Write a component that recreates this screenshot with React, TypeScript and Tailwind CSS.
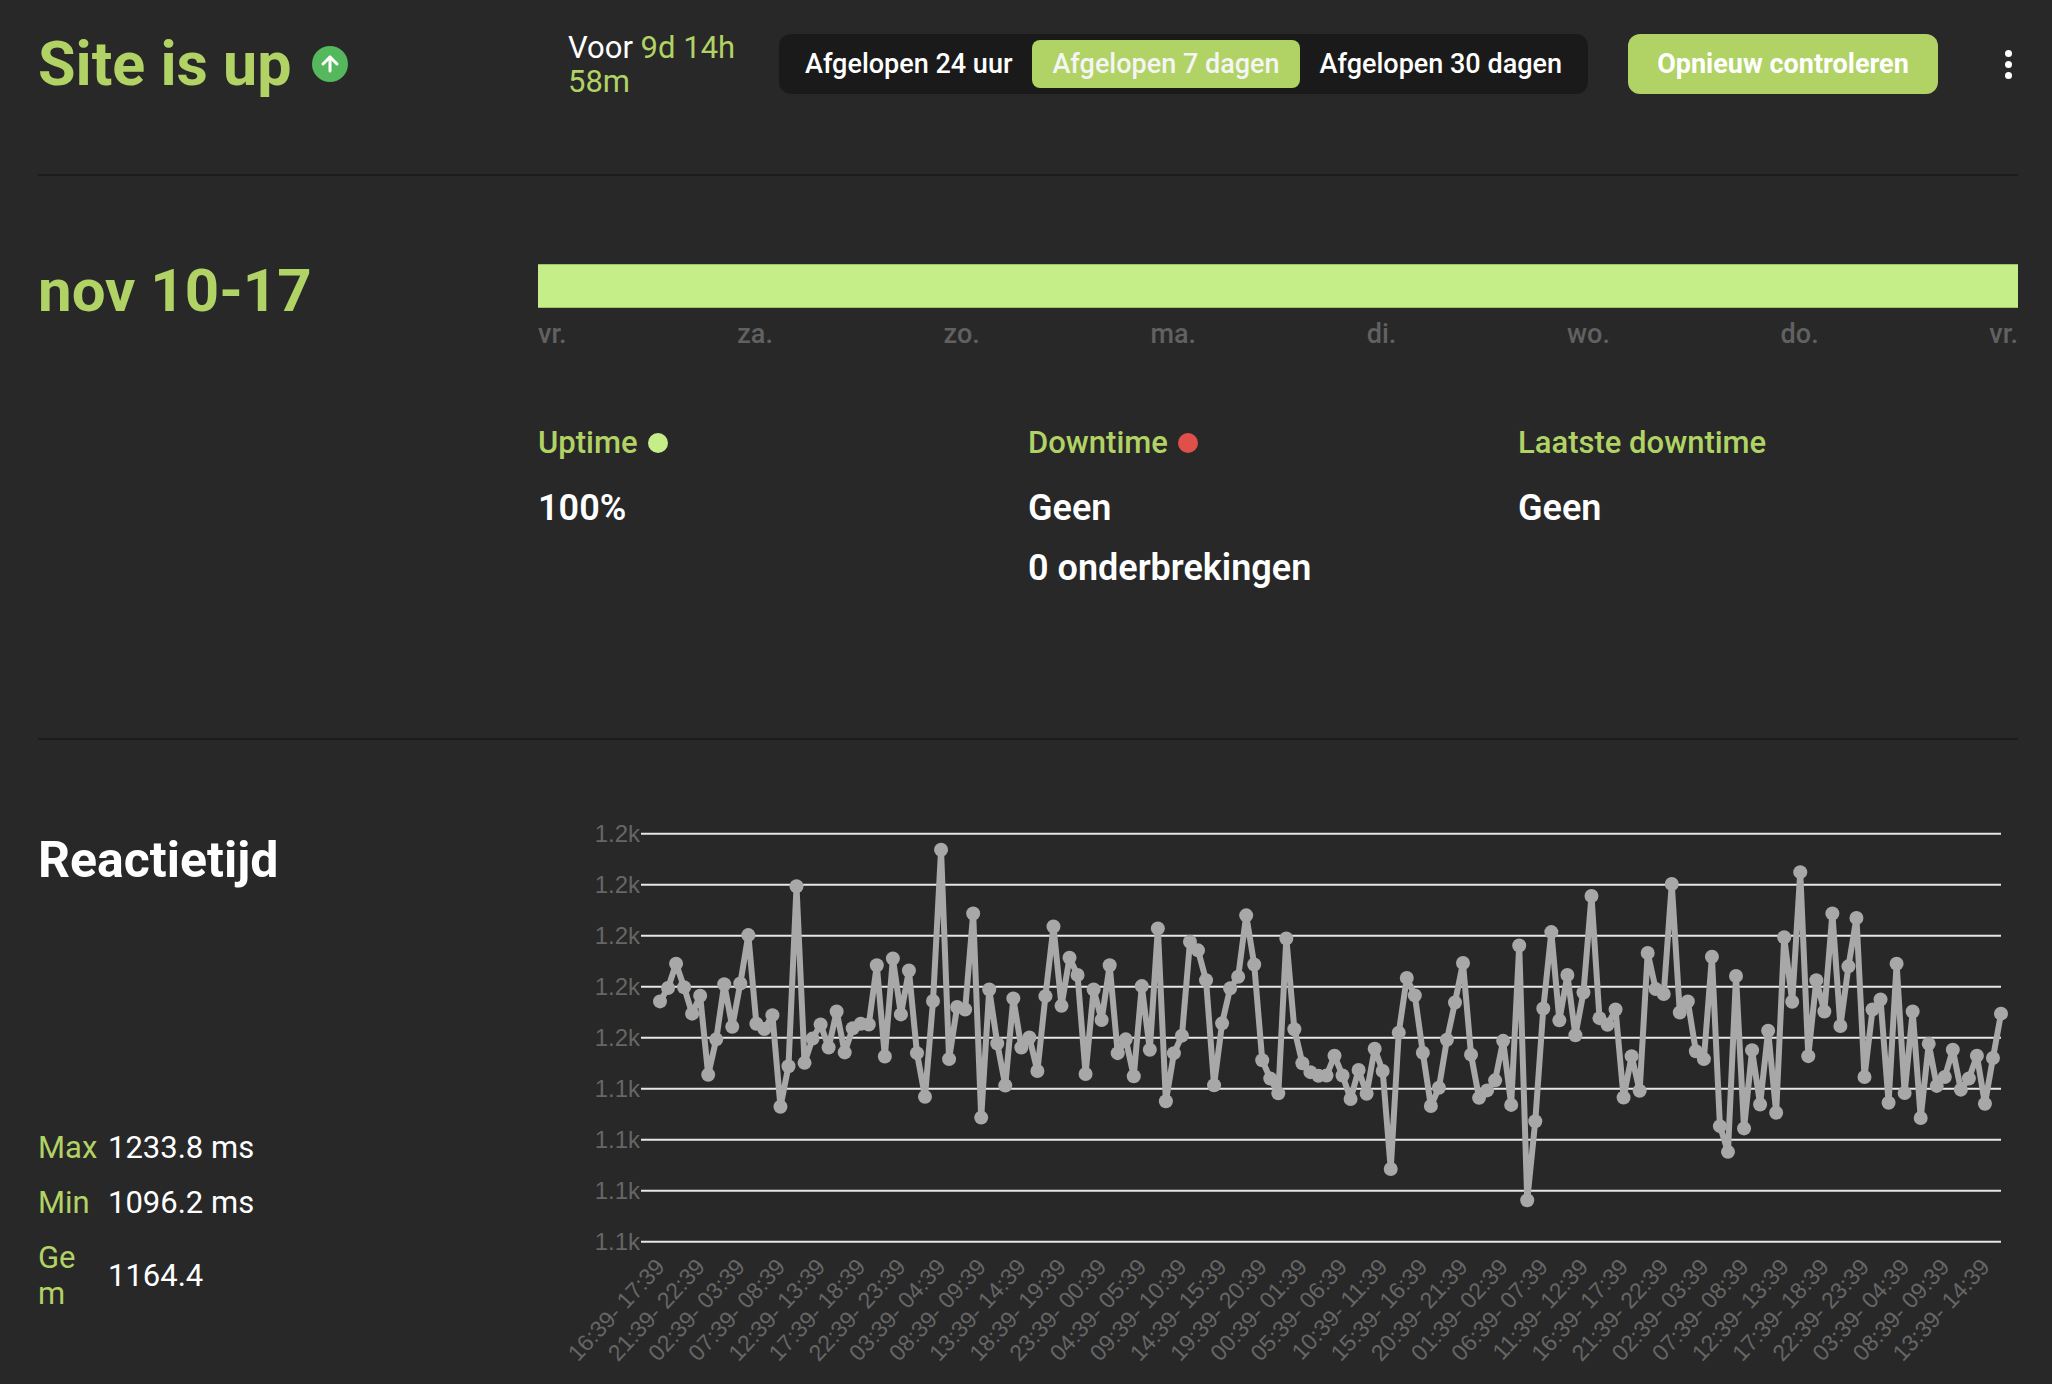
import React from 'react';
import { ArrowUp } from 'lucide-react';

const tabs = ['Afgelopen 24 uur', 'Afgelopen 7 dagen', 'Afgelopen 30 dagen'];
const days = ['vr.', 'za.', 'zo.', 'ma.', 'di.', 'wo.', 'do.', 'vr.'];

// y positions of the response time samples, traced from the crops
const samples = [
  538, 502, 437, 500, 571, 523, 735, 640, 492, 606, 490, 360, 598, 612, 575, 821, 712, 229, 703, 638, 600, 662, 565, 675, 610, 598, 600, 441, 686, 423, 573, 455, 677, 794, 537, 131, 693, 553, 560, 302, 850, 506, 651, 764, 530, 662, 635, 725, 524, 337,
  550, 421, 467, 733, 506, 588, 441, 677, 640, 739, 497, 668, 342, 806, 677, 630, 378, 401, 481, 763, 597, 503, 472, 307, 439, 696, 745, 785, 369, 613, 704, 728, 738, 737, 684, 737, 800, 722, 786, 665, 725, 988, 622, 475, 522, 676, 819, 770, 641, 541, 435, 681, 797, 777, 750, 644, 816, 388, 1072, 860,
  557, 352, 589, 467, 629, 514, 255, 583, 601, 560, 796, 685, 778, 408, 505, 518, 223, 568, 538, 672, 693, 418, 873, 942, 470, 879, 669, 815, 617, 837, 366, 539, 191, 685, 481, 565, 302, 604, 444, 314, 741, 560, 533, 810, 437, 784, 565, 851, 652, 765, 741, 668, 775, 745, 684, 813, 690, 571,
];

const tickLabels = ['1.2k', '1.2k', '1.2k', '1.2k', '1.2k', '1.1k', '1.1k', '1.1k', '1.1k'];

const pad = (n: number) => String(n % 24).padStart(2, '0');
const pointX = (i: number) => 122 + (i * 1341) / 167;

const ResponseChart: React.FC = () => {
  const points = samples.map((v, i) => ({ x: pointX(i), y: v * 0.37245 }));
  const hourLabels = samples.map((_, i) => i).filter((i) => i % 5 === 0);

  return (
    <svg className="block" width="1480" height="584" viewBox="0 0 1480 584">
      {tickLabels.map((label, i) => {
        const y = 32.8 + i * 51;
        return (
          <g key={i}>
            <line x1="103" x2="1463" y1={y} y2={y} stroke="#e6e6e6" strokeWidth="2" />
            <text x="102" y={y + 8} textAnchor="end" fontSize="24" fill="#666666" fontFamily="Liberation Sans, sans-serif">
              {label}
            </text>
          </g>
        );
      })}
      <polyline points={points.map((p) => `${p.x},${p.y}`).join(' ')} fill="none" stroke="#a8a8a8" strokeWidth="6" strokeLinejoin="round" />
      {points.map((p, i) => (
        <circle key={i} cx={p.x} cy={p.y} r="7" fill="#a8a8a8" />
      ))}
      {hourLabels.map((i) => (
        <text
          key={i}
          x={pointX(i) + 6}
          y={467}
          textAnchor="end"
          fontSize="23"
          fill="#666666"
          fontFamily="Liberation Sans, sans-serif"
          transform={`rotate(-47 ${pointX(i) + 6} 467)`}
        >
          {`${pad(16 + i)}:39- ${pad(17 + i)}:39`}
        </text>
      ))}
    </svg>
  );
};

const App: React.FC = () => {
  return (
    <div className="h-screen overflow-hidden bg-[#282828] pl-[38px] pr-[34px] font-['Roboto',sans-serif] text-white">
      <header className="flex h-[176px] items-start border-b-2 border-[#1c1c1c] pt-[34px]">
        <div className="flex h-[60px] w-[530px] items-center gap-[20px]">
          <h1 className="text-[61px] leading-[60px] font-bold text-[#b1d264]">Site is up</h1>
          <span className="flex h-[36px] w-[36px] items-center justify-center rounded-full bg-[#55b85d]">
            <ArrowUp size={24} strokeWidth={3} />
          </span>
        </div>
        <div className="-mt-[3px] w-[211px] text-[31px] leading-[34px]">
          Voor <span className="text-[#b1d264]">9d 14h</span> <span className="text-[#b1d264]">58m</span>
        </div>
        <div className="flex h-[60px] items-center rounded-xl bg-[#1a1a1a] px-[6px] text-[27px] font-medium">
          {tabs.map((tab, i) => (
            <button key={tab} className={i === 1 ? 'h-[48px] rounded-lg bg-[#b1d264] px-[20px] text-[#f5f5f5]' : 'h-[48px] px-[20px]'}>
              {tab}
            </button>
          ))}
        </div>
        <button className="ml-[40px] h-[60px] w-[310px] rounded-xl bg-[#b1d264] text-[27px] font-bold">
          Opnieuw controleren
        </button>
        <div className="ml-[67px] flex h-[60px] flex-col items-center justify-center gap-[4px]">
          <span className="h-[7px] w-[7px] rounded-full bg-white" />
          <span className="h-[7px] w-[7px] rounded-full bg-white" />
          <span className="h-[7px] w-[7px] rounded-full bg-white" />
        </div>
      </header>

      <section className="flex h-[564px] border-b-2 border-[#1c1c1c] pt-[88px]">
        <h2 className="w-[500px] text-[60px] leading-[54px] font-bold text-[#b1d264]">nov 10-17</h2>
        <div className="flex-1">
          <div className="h-[44px] border-y border-[#9fc26a] bg-[#c5ee89]" />
          <div className="mt-[11px] flex justify-between text-[27px] leading-[30px] font-medium text-[#616161]">
            {days.map((day, i) => (
              <span key={i}>{day}</span>
            ))}
          </div>
          <div className="mt-[76px] grid grid-cols-[490px_490px_1fr]">
            <div>
              <div className="flex h-[36px] items-center gap-[10px] text-[31px] font-medium text-[#b1d264]">
                Uptime <span className="h-[20px] w-[20px] rounded-full bg-[#c5ee89]" />
              </div>
              <p className="mt-[27px] text-[36px] leading-[40px] font-semibold">100%</p>
            </div>
            <div>
              <div className="flex h-[36px] items-center gap-[10px] text-[31px] font-medium text-[#b1d264]">
                Downtime <span className="h-[20px] w-[20px] rounded-full bg-[#e0504a]" />
              </div>
              <p className="mt-[27px] text-[36px] leading-[40px] font-semibold">Geen</p>
              <p className="mt-[20px] text-[36px] leading-[40px] font-semibold">0 onderbrekingen</p>
            </div>
            <div>
              <div className="flex h-[36px] items-center text-[31px] font-medium text-[#b1d264]">Laatste downtime</div>
              <p className="mt-[27px] text-[36px] leading-[40px] font-semibold">Geen</p>
            </div>
          </div>
        </div>
      </section>

      <section className="flex">
        <div className="w-[500px] pt-[90px]">
          <h2 className="text-[50px] leading-[60px] font-bold">Reactietijd</h2>
          <table className="mt-[230px] text-[31px] leading-[36px]">
            <tbody>
              <tr className="h-[55px]">
                <td className="w-[70px] text-[#b1d264]">Max</td>
                <td>1233.8 ms</td>
              </tr>
              <tr className="h-[55px]">
                <td className="text-[#b1d264]">Min</td>
                <td>1096.2 ms</td>
              </tr>
              <tr className="h-[92px]">
                <td className="text-[#b1d264]">
                  Ge
                  <br />m
                </td>
                <td>1164.4</td>
              </tr>
            </tbody>
          </table>
        </div>
        <div className="mt-[61px]">
          <ResponseChart />
        </div>
      </section>
    </div>
  );
};

export default App;
